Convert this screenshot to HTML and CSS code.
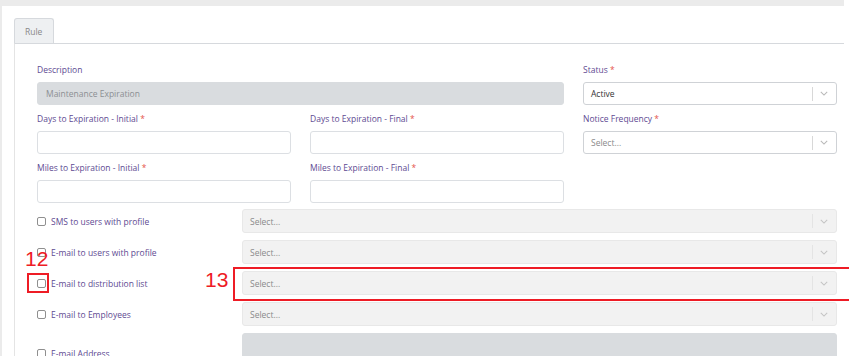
FILE: index.html
```html
<!DOCTYPE html>
<html lang="en">
<head>
    <meta charset="UTF-8">
    <title>Rule</title>
    <link rel="stylesheet" href="styles.css">
</head>
<body>
    <div class="shell">
        <div class="card">
            <div class="tabs">
                <span class="tab">Rule</span>
            </div>
            <div class="panel">
                <div class="grid">
                    <div class="field span-2">
                        <label>Description</label>
                        <div class="input disabled">Maintenance Expiration</div>
                    </div>
                    <div class="field">
                        <label>Status <em>*</em></label>
                        <div class="select">
                            <span class="value">Active</span>
                            <span class="sep"></span>
                            <svg class="chevron" viewBox="0 0 10 6"><path d="M1 1l4 4 4-4" /></svg>
                        </div>
                    </div>
                    <div class="field">
                        <label>Days to Expiration - Initial <em>*</em></label>
                        <div class="input"></div>
                    </div>
                    <div class="field">
                        <label>Days to Expiration - Final <em>*</em></label>
                        <div class="input"></div>
                    </div>
                    <div class="field">
                        <label>Notice Frequency <em>*</em></label>
                        <div class="select">
                            <span class="value placeholder">Select...</span>
                            <span class="sep"></span>
                            <svg class="chevron" viewBox="0 0 10 6"><path d="M1 1l4 4 4-4" /></svg>
                        </div>
                    </div>
                    <div class="field">
                        <label>Miles to Expiration - Initial <em>*</em></label>
                        <div class="input"></div>
                    </div>
                    <div class="field">
                        <label>Miles to Expiration - Final <em>*</em></label>
                        <div class="input"></div>
                    </div>
                </div>

                <div class="checks">
                    <div class="check"><span class="box"></span>SMS to users with profile</div>
                    <div class="select off">
                        <span class="value placeholder">Select...</span>
                        <span class="sep"></span>
                        <svg class="chevron" viewBox="0 0 10 6"><path d="M1 1l4 4 4-4" /></svg>
                    </div>
                    <div class="check"><span class="box"></span>E-mail to users with profile</div>
                    <div class="select off">
                        <span class="value placeholder">Select...</span>
                        <span class="sep"></span>
                        <svg class="chevron" viewBox="0 0 10 6"><path d="M1 1l4 4 4-4" /></svg>
                    </div>
                    <div class="check"><span class="box"></span>E-mail to distribution list</div>
                    <div class="select off">
                        <span class="value placeholder">Select...</span>
                        <span class="sep"></span>
                        <svg class="chevron" viewBox="0 0 10 6"><path d="M1 1l4 4 4-4" /></svg>
                    </div>
                    <div class="check"><span class="box"></span>E-mail to Employees</div>
                    <div class="select off">
                        <span class="value placeholder">Select...</span>
                        <span class="sep"></span>
                        <svg class="chevron" viewBox="0 0 10 6"><path d="M1 1l4 4 4-4" /></svg>
                    </div>
                    <div class="check"><span class="box"></span>E-mail Address</div>
                    <div class="input disabled tall"></div>
                </div>
            </div>
        </div>
    </div>

    <!-- annotations -->
    <span class="mark num-12">12</span>
    <span class="mark-box box-12"></span>
    <span class="mark num-13">13</span>
    <span class="mark-box box-13"></span>
</body>
</html>
```

FILE: styles.css
```css
body {
    margin: 0;
    background-color: #ffffff;
    font-family: 'Open Sans', 'Noto Sans', sans-serif;
    font-size: 8.5px;
    color: #333;
    overflow: hidden;
}
.shell {
    background-color: #ebebeb;
    width: 842px;
    padding: 6px 0 0 2px;
}
.card {
    background-color: #fff;
    padding: 12px 0 0 12px;
    height: 400px;
}
.tabs {
    display: flex;
}
.tab {
    display: block;
    padding: 0 10px;
    height: 24px;
    line-height: 25px;
    width: 18px;
    background-color: #eef0f2;
    border: 1px solid #d6d9dd;
    border-bottom: none;
    border-radius: 3px 3px 0 0;
    color: #888;
}
.panel {
    border-top: 1px solid #d6d9dd;
    border-left: 1px solid #e4e4e4;
    padding: 20px 0 0 22px;
}
.grid {
    display: grid;
    grid-template-columns: 254px 254px 254px;
    column-gap: 19px;
    row-gap: 8px;
}
.span-2 {
    grid-column: span 2;
}
.field label {
    display: block;
    height: 12px;
    line-height: 12px;
    margin-bottom: 6px;
    color: #5e4a92;
}
.field label em {
    font-style: normal;
    color: #e5534b;
}
.field .select {
    height: 23px;
}
.input {
    box-sizing: border-box;
    height: 23px;
    border: 1px solid #dcdfe3;
    border-radius: 3px;
    background-color: #fff;
    padding: 0 8px;
    line-height: 21px;
}
.input.disabled {
    background-color: #d9dcdf;
    border-color: #d9dcdf;
    color: #8c8f93;
}
.input.tall {
    height: 40px;
}
.select {
    box-sizing: border-box;
    height: 24px;
    border: 1px solid #cfd2d6;
    border-radius: 3px;
    display: flex;
    align-items: center;
    padding-left: 7px;
}
.select .value {
    flex: 1;
    color: #333;
}
.select .placeholder {
    color: #8a8a8a;
}
.select .sep {
    width: 1px;
    height: 14px;
    background-color: #d8d8d8;
}
.chevron {
    width: 8px;
    height: 5px;
    margin: 0 8px 0 7px;
    fill: none;
    stroke: #b8b8b8;
    stroke-width: 1.3;
}
.select.off {
    background-color: #f2f2f2;
    border-color: #e8e8e8;
}
.select.off .sep {
    background-color: #e4e4e4;
}
.select.off .chevron {
    stroke: #c4c4c4;
}
.checks {
    display: grid;
    grid-template-columns: 205px 595px;
    row-gap: 7px;
    margin-top: 6px;
}
.check {
    display: flex;
    align-items: center;
    color: #5e4a92;
}
.check .box {
    box-sizing: border-box;
    width: 9px;
    height: 9px;
    border: 1px solid #8f8f8f;
    border-radius: 2px;
    margin-right: 5px;
}
.mark {
    position: absolute;
    font-family: 'Liberation Sans', Arial, sans-serif;
    font-size: 21px;
    line-height: 21px;
    color: #ee1c25;
}
.num-12 {
    left: 25px;
    top: 248px;
}
.num-13 {
    left: 205px;
    top: 269px;
}
.mark-box {
    position: absolute;
    border: 2px solid #ee1c25;
}
.box-12 {
    left: 27px;
    top: 273px;
    width: 18px;
    height: 16px;
}
.box-13 {
    left: 233px;
    top: 267px;
    width: 640px;
    height: 30px;
}
```
